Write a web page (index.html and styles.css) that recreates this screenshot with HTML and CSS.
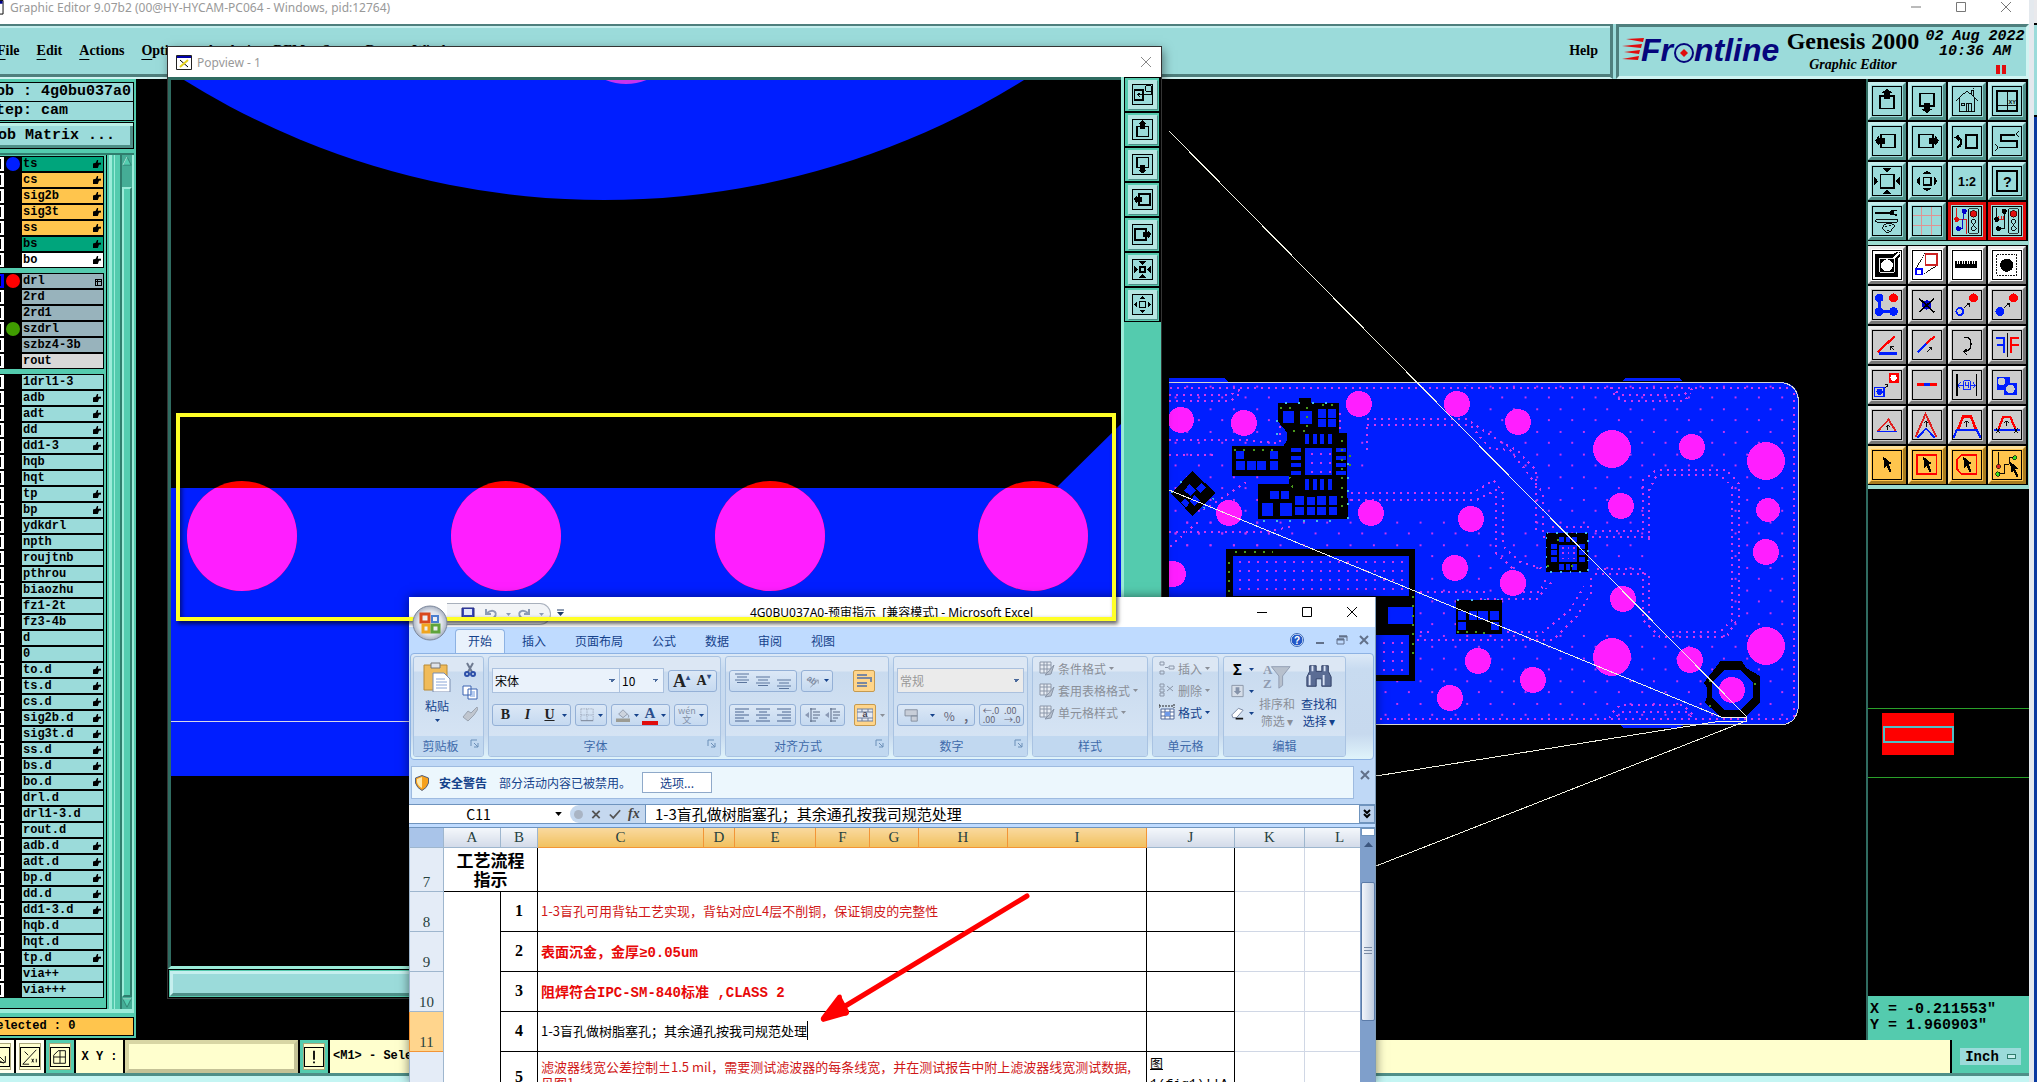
FILE: index.html
```html
<!DOCTYPE html>
<html lang="zh-CN">
<head>
<meta charset="utf-8">
<title>Graphic Editor</title>
<link rel="stylesheet" href="styles.css">
</head>
<body>
<svg class="defs" aria-hidden="true">
  <symbol id="up" viewBox="0 0 90 90"><path d="M23 30H68V69H23Z" fill="none" stroke="#000" stroke-width="6"/><path d="M45 5L61 18H56V40H35V18H29Z"/></symbol>
  <symbol id="down" viewBox="0 0 90 90"><path d="M23 21H68V60H23Z" fill="none" stroke="#000" stroke-width="6"/><path d="M45 84L61 72H56V50H35V72H29Z"/></symbol>
  <symbol id="left" viewBox="0 0 90 90"><path d="M27 24H71V66H27Z" fill="none" stroke="#000" stroke-width="6"/><path d="M6 44L19 28V36H38V54H19V60Z"/></symbol>
  <symbol id="right" viewBox="0 0 90 90"><path d="M19 24H63V66H19Z" fill="none" stroke="#000" stroke-width="6"/><path d="M84 44L71 28V36H52V54H71V60Z"/></symbol>
  <symbol id="inward" viewBox="0 0 90 90"><path d="M24 24H67V67H24Z" fill="none" stroke="#000" stroke-width="5"/><path d="M30 3H60L45 16ZM30 87H60L45 74ZM2 30V60L16 45ZM88 30V60L74 45Z"/></symbol>
  <symbol id="outward" viewBox="0 0 90 90"><path d="M34 34H57V57H34Z" fill="none" stroke="#000" stroke-width="5"/><path d="M30 24H60L45 10ZM30 66H60L45 80ZM24 30V60L10 45ZM66 30V60L80 45Z"/></symbol>
  <symbol id="arrow" viewBox="0 0 90 90"><path d="M33 18L60 40L50 43L60 64L54 68L44 48L36 54Z"/></symbol>
  <symbol id="light" viewBox="0 0 34 82"><path d="M2 2H32V80H2Z" fill="#9bdbda" stroke="#000" stroke-width="3"/><circle cx="17" cy="18" r="11" fill="#e00d0d" stroke="#000" stroke-width="2"/><circle cx="17" cy="43" r="8" fill="none" stroke="#000" stroke-width="3"/><circle cx="17" cy="65" r="8" fill="none" stroke="#000" stroke-width="3"/></symbol>
  <symbol id="tri" viewBox="0 0 5 3"><path d="M0 0H5L2.500 3Z" fill="currentColor"/></symbol>
  <symbol id="launch" viewBox="0 0 9 9"><path d="M1 7V1H7M4 4L8 8M8 4V8H4" fill="none" stroke="#6b8fb8"/></symbol>
  <symbol id="alignl" viewBox="0 0 16 14"><path d="M1 1H15M1 4H10M1 7H15M1 10H10M1 13H15" stroke="#4a6490"/></symbol>
  <symbol id="alignc" viewBox="0 0 16 14"><path d="M1 1H15M4 4H12M1 7H15M4 10H12M1 13H15" stroke="#4a6490"/></symbol>
  <symbol id="alignr" viewBox="0 0 16 14"><path d="M1 1H15M6 4H15M1 7H15M6 10H15M1 13H15" stroke="#4a6490"/></symbol>
  <symbol id="indent" viewBox="0 0 16 14"><path d="M5 1H11M8 4H15M8 7H15M8 10H13M5 13H11M6 0V14" stroke="#5a6a86" stroke-dasharray="none"/><path d="M0 7L4 4V10Z" fill="#8b9ab5"/></symbol>
  <symbol id="bars" viewBox="0 0 16 10"><path d="M1 1H15M3 4H13M1 7H15M3 9.500H13" stroke="#5a749c"/></symbol>
  <symbol id="sheet" viewBox="0 0 16 16"><path d="M1 2H12V13H1ZM1 5H12M1 9H12M5 2V13M8 2V13" fill="#e8edf4" stroke="#8b96a8"/><path d="M15 5L9 12L6 15L12 14Z" fill="#b7c0cd" stroke="#8b96a8"/></symbol>
</svg>

<main class="genesis">
  <header class="title"><svg class="xicon" viewBox="0 0 16 16"><path d="M.5.5H15.500V15H.5Z" fill="#fff" stroke="#000"/><path d="M1 1H15V4H1Z" fill="#008"/><path d="M4 6L12 13M12 6L4 13" stroke="#000"/></svg>
    <span>Graphic Editor 9.07b2 (00@HY-HYCAM-PC064 - Windows, pid:12764)</span>
    <div class="winctl"><button aria-label="Minimize"><svg viewBox="0 0 12 12"><path d="M1 6H11"/></svg></button><button aria-label="Maximize"><svg viewBox="0 0 12 12"><path d="M1.500 1.500H10.500V10.500H1.500Z"/></svg></button><button aria-label="Close"><svg viewBox="0 0 12 12"><path d="M1 1L11 11M11 1L1 11"/></svg></button></div>
  </header>
  <div class="top">
    <nav class="menu">
      <button><u>F</u>ile</button><button><u>E</u>dit</button><button><u>A</u>ctions</button><button><u>O</u>ptions</button><button>Analysis</button><button>DFM</button><button>Step</button><button>Rout</button><button>Windows</button><button class="help">Help</button>
    </nav>
    <section class="brand">
      <svg class="logo" viewBox="0 0 160 28"><g fill="#e00d0d"><path d="M4 2L22 1L21 5ZM0 9L20 7L19 11ZM2 15L18 13L17 17ZM0 22L17 19L16 23Z"/></g><text x="19" y="24">Fr</text><circle cx="62" cy="16" r="9" fill="none" stroke="#06067c" stroke-width="2"/><path d="M62 12L66 16L62 20L58 16Z" fill="#e00d0d"/><text x="72" y="24">ntline</text></svg>
      <div class="product"><b>Genesis 2000</b><i>Graphic Editor</i></div>
      <div class="clock"><span>02 Aug 2022</span><span>10:36 AM</span><svg viewBox="0 0 10 9"><path d="M0 0H4V9H0ZM6 0H10V9H6Z" fill="#e00d0d"/></svg></div>
    </section>
  </div>

  <div class="work">
    <aside class="layers">
      <div class="info"><p>Job : 4g0bu037a0</p><p>Step: cam</p></div>
      <button class="matrix">Job Matrix ...</button>
      <div class="frame">
        <div class="list">
          <div class="grp">
            <label class="ly green h"><input type="checkbox"><i class="blue"></i><span>ts</span></label>
            <label class="ly orange h"><input type="checkbox"><i></i><span>cs</span></label>
            <label class="ly orange h"><input type="checkbox"><i></i><span>sig2b</span></label>
            <label class="ly orange h"><input type="checkbox"><i></i><span>sig3t</span></label>
            <label class="ly orange h"><input type="checkbox"><i></i><span>ss</span></label>
            <label class="ly green h"><input type="checkbox"><i></i><span>bs</span></label>
            <label class="ly white h"><input type="checkbox"><i></i><span>bo</span></label>
          </div>
          <div class="grp">
            <label class="ly gray plus"><input type="checkbox" class="sel"><i class="red"></i><span>drl</span></label>
            <label class="ly gray"><input type="checkbox"><i></i><span>2rd</span></label>
            <label class="ly gray"><input type="checkbox"><i></i><span>2rd1</span></label>
            <label class="ly gray"><input type="checkbox"><i class="olive"></i><span>szdrl</span></label>
            <label class="ly gray"><input type="checkbox"><i></i><span>szbz4-3b</span></label>
            <label class="ly pale"><input type="checkbox"><i></i><span>rout</span></label>
          </div>
          <div class="grp">
            <label class="ly"><input type="checkbox"><i></i><span>1drl1-3</span></label>
            <label class="ly h"><input type="checkbox"><i></i><span>adb</span></label>
            <label class="ly h"><input type="checkbox"><i></i><span>adt</span></label>
            <label class="ly h"><input type="checkbox"><i></i><span>dd</span></label>
            <label class="ly h"><input type="checkbox"><i></i><span>dd1-3</span></label>
            <label class="ly"><input type="checkbox"><i></i><span>hqb</span></label>
            <label class="ly"><input type="checkbox"><i></i><span>hqt</span></label>
            <label class="ly h"><input type="checkbox"><i></i><span>tp</span></label>
            <label class="ly h"><input type="checkbox"><i></i><span>bp</span></label>
            <label class="ly"><input type="checkbox"><i></i><span>ydkdrl</span></label>
            <label class="ly"><input type="checkbox"><i></i><span>npth</span></label>
            <label class="ly"><input type="checkbox"><i></i><span>roujtnb</span></label>
            <label class="ly"><input type="checkbox"><i></i><span>pthrou</span></label>
            <label class="ly"><input type="checkbox"><i></i><span>biaozhu</span></label>
            <label class="ly"><input type="checkbox"><i></i><span>fz1-2t</span></label>
            <label class="ly"><input type="checkbox"><i></i><span>fz3-4b</span></label>
            <label class="ly"><input type="checkbox"><i></i><span>d</span></label>
            <label class="ly"><input type="checkbox"><i></i><span>0</span></label>
            <label class="ly h"><input type="checkbox"><i></i><span>to.d</span></label>
            <label class="ly h"><input type="checkbox"><i></i><span>ts.d</span></label>
            <label class="ly h"><input type="checkbox"><i></i><span>cs.d</span></label>
            <label class="ly h"><input type="checkbox"><i></i><span>sig2b.d</span></label>
            <label class="ly h"><input type="checkbox"><i></i><span>sig3t.d</span></label>
            <label class="ly h"><input type="checkbox"><i></i><span>ss.d</span></label>
            <label class="ly h"><input type="checkbox"><i></i><span>bs.d</span></label>
            <label class="ly h"><input type="checkbox"><i></i><span>bo.d</span></label>
            <label class="ly"><input type="checkbox"><i></i><span>drl.d</span></label>
            <label class="ly"><input type="checkbox"><i></i><span>drl1-3.d</span></label>
            <label class="ly"><input type="checkbox"><i></i><span>rout.d</span></label>
            <label class="ly h"><input type="checkbox"><i></i><span>adb.d</span></label>
            <label class="ly h"><input type="checkbox"><i></i><span>adt.d</span></label>
            <label class="ly h"><input type="checkbox"><i></i><span>bp.d</span></label>
            <label class="ly h"><input type="checkbox"><i></i><span>dd.d</span></label>
            <label class="ly h"><input type="checkbox"><i></i><span>dd1-3.d</span></label>
            <label class="ly"><input type="checkbox"><i></i><span>hqb.d</span></label>
            <label class="ly"><input type="checkbox"><i></i><span>hqt.d</span></label>
            <label class="ly h"><input type="checkbox"><i></i><span>tp.d</span></label>
            <label class="ly"><input type="checkbox"><i></i><span>via++</span></label>
            <label class="ly"><input type="checkbox"><i></i><span>via+++</span></label>
          </div>
        </div>
        <div class="groove"></div>
        <div class="vscroll"><svg viewBox="0 0 12 12"><path d="M6 1L11 11H1Z" fill="#54cdb0" stroke="#2f7d6d"/><path d="M6 1L1 11" stroke="#b9f5e6"/></svg><div class="thumb"></div><svg viewBox="0 0 12 12"><path d="M6 11L11 1H1Z" fill="#54cdb0" stroke="#2f7d6d"/><path d="M1 1H11" stroke="#b9f5e6"/></svg></div>
      </div>
      <p class="selected">Selected : 0</p>
    </aside>

    <section class="canvas">
      <svg viewBox="136 79 1730 961" preserveAspectRatio="xMinYMin slice">
        <defs>
          <pattern id="scatter" width="70" height="68" patternUnits="userSpaceOnUse"><path d="M8 8h6v6h-6ZM43 42h6v6h-6Z" fill="#c834ee"/></pattern>
          <pattern id="mesh" width="27" height="27" patternUnits="userSpaceOnUse"><path d="M20 10h6v6h-6Z" fill="#c834ee"/></pattern>
          <clipPath id="board"><path d="M1169 382H1782Q1799 384 1799 402V706Q1797 722 1784 724H1169Z"/></clipPath>
        </defs>
        <path d="M1169 378H1224L1228 382H1169ZM1622 381L1626 378H1679L1683 381ZM1620 725L1624 728H1678L1684 725Z" fill="#001eff"/>
        <g clip-path="url(#board)">
          <path d="M1160 370H1810V730H1160Z" fill="#001eff"/>
          <g transform="translate(1160 360) scale(.33333)">
            <path d="M570 60H1900V1090H650V720H790V560H30V480H290V380H600V470H1100V380H600V200L980 190V80Z" fill="url(#scatter)"/>
            <path d="M27 60H350V560H27Z" fill="url(#scatter)"/>
          </g>
          <g transform="translate(1480 360) scale(.33333)">
            <path d="M-330 200H0L70 260L160 360V500H-20L-40 410H-330ZM510 345H750V815H510ZM80 650L190 640H500V800H230L60 820Z" fill="#001eff"/>
            <g fill="none" stroke="#d038f0" stroke-width="6" stroke-dasharray="6 15">
              <path d="M-950 84H930M942 100V1070M-300 1077H940M390 84L424 105H610L640 84M400 100L424 124H612L632 100M388 1075L405 1048L424 1035H610L640 1065M410 1070L424 1056H620L640 1077"/>
              <path d="M-340 178H-40L70 250L110 270L168 330V520M-340 195H-30L30 265L90 270L147 345L189 400V530H510M345 513H490V360L530 330H740L776 370V770L740 830H540L490 780V627H335M345 643H508V800M508 540V390L530 345H720L757 380V780L720 815H560"/>
              <path d="M-450 399H-20L40 360L70 400V560L120 605L190 627M-450 420H-10L49 390V580L100 627M-200 815H-150M-210 840H220L290 770L333 700V650M80 816H190L270 750L312 680M-200 697L20 697M0 718H170L220 660M130 697H180L200 650M215 500H335"/>
              <path d="M-933 105H-750L-710 84M-933 124H-750L-720 100M-933 240H-710L-600 250V180M-933 285H-800M-933 515H-650L-560 500M-830 450L-700 366M-930 560L-840 480M-420 160V280M-340 200V270"/>
            </g>
          </g>
          <g transform="translate(1160 360) scale(.33333)">
            <path d="M354 129H417V115H453V129H537V220H561L563 476H295V373H388V348H217V258H370L382 240V218L354 185ZM98 333L167 400L98 468L33 400ZM199 567H765V962H199ZM888 720H1026V822H888Z"/>
            <g fill="#001eff">
              <path d="M369 153h33v35h-33zM420 153h36v39h-36zM474 147h24v27h-24zM504 147h24v27h-24zM474 178h24v22h-24zM504 178h24v22h-24zM435 222h12v30h-12zM459 222h12v30h-12zM481 222h12v30h-12zM504 222h12v30h-12zM435 263h81v82h-81zM393 264h30v12h-30zM393 288h30v12h-30zM393 310h30v12h-30zM393 333h30v12h-30zM528 264h30v12h-30zM528 288h30v12h-30zM528 310h30v12h-30zM528 333h30v12h-30zM435 357h12v33h-12zM459 357h12v33h-12zM481 357h12v33h-12zM504 357h12v33h-12z"/>
              <path d="M228 273h24v24h-24zM331 273h24v24h-24zM228 303h27v26h-27zM261 303h27v26h-27zM291 303h27v26h-27zM331 303h24v26h-24zM331 393h26v24h-26zM363 393h24v24h-24zM306 430h33v38h-33zM360 430h36v38h-36zM405 408h27v27h-27zM442 411h24v24h-24zM471 408h27v27h-27zM508 408h24v27h-24zM405 441h27v24h-27zM442 441h24v24h-24zM471 441h27v24h-27zM508 441h24v24h-24z"/>
              <path d="M88 373L108 392L92 408L72 392ZM124 370L138 383L122 398L108 385ZM104 405L120 420L104 438L88 424ZM74 416L88 430L78 442L62 428ZM219 588H747V708H219ZM684 741h75v51h-75zM640 825h107v120h-107zM894 753h24v27h-24zM927 753h24v27h-24zM957 753h27v27h-27zM990 753h27v27h-27zM894 786h24v24h-24zM993 786h24v24h-24z"/>
            </g>
            <path d="M219 588H747V700H219ZM640 825h107v110h-107zM437 265h75v75h-75z" fill="url(#mesh)"/>
            <g fill="none" stroke="#4a9a1c" stroke-width="6" stroke-dasharray="6 22"><path d="M222 270H350M360 145H400M400 212H440M440 140V200M485 135H530M388 350L400 390M547 240V465M570 285V340M225 576H340M207 605V700M758 708V900M890 815H1020"/></g>
            <g fill="none" stroke="#45b8e8" stroke-width="6" stroke-dasharray="6 34"><path d="M375 129H500M351 180V260M563 310V476M308 482H540M892 720H1020M35 398L80 345M130 445L160 415"/></g>
          </g>
          <g transform="translate(1480 360) scale(.33333)">
            <path d="M-6 720H66V822H-6ZM198 520H324V636H198ZM722 903H785L800 925L840 948V1028L798 1070H722L675 1028L682 1005V985L672 968Z"/>
            <path d="M-6 753h30v27h-30zM30 753h27v27h-27zM33 786h24v24h-24zM237 555h54v50h-54zM238 531h14v14h-14zM257 531h14v14h-14zM276 531h14v14h-14zM238 612h14v18h-14zM257 612h14v18h-14zM276 612h14v18h-14zM214 552h17v15h-17zM214 571h17v15h-17zM214 590h17v15h-17zM298 552h17v15h-17zM298 571h17v15h-17zM298 590h17v15h-17zM733 930H781L819 968V1012L781 1050H733L695 1012V968Z" fill="#001eff"/>
            <path d="M246 564H290M246 580H290M246 596H290" fill="none" stroke="#c834ee" stroke-width="5" stroke-dasharray="5 12"/>
            <path d="M200 520H324V636H200Z" fill="none" stroke="#45b8e8" stroke-width="5" stroke-dasharray="5 24"/>
            <path d="M690 960V1040M825 970V1030M230 540H300M200 618H310M10 818H60" fill="none" stroke="#4a9a1c" stroke-width="6" stroke-dasharray="6 68"/>
          </g>
          <g fill="#ff1eff">
            <circle cx="1181" cy="420" r="13"/><circle cx="1244" cy="423" r="13"/><circle cx="1359" cy="404" r="13"/><circle cx="1457" cy="404" r="13"/><circle cx="1229" cy="513" r="13"/><circle cx="1371" cy="513" r="13"/><circle cx="1471" cy="519" r="13"/><circle cx="1455" cy="568" r="13"/><circle cx="1173" cy="574" r="13"/><circle cx="1478" cy="661" r="13"/><circle cx="1450" cy="698" r="13"/>
            <circle cx="1518" cy="422" r="13"/><circle cx="1612" cy="449" r="19"/><circle cx="1692" cy="447" r="13"/><circle cx="1766" cy="461" r="19"/><circle cx="1621" cy="506" r="13"/><circle cx="1768" cy="510" r="12"/><circle cx="1766" cy="552" r="13"/><circle cx="1513" cy="583" r="13"/><circle cx="1623" cy="599" r="13"/><circle cx="1612" cy="657" r="19"/><circle cx="1690" cy="660" r="13"/><circle cx="1766" cy="646" r="19"/><circle cx="1533" cy="680" r="13"/><circle cx="1732" cy="690" r="13"/>
          </g>
        </g>
        <path d="M1169 382.500H1782Q1798 385 1798.500 402V706Q1797 722 1784 724.500H1169" fill="none" stroke="#d8d8d0"/>
        <path d="M1169 131L1747 717M1169 490L1721 717H1746V721H1721L1376 776M1746 721L1376 866" fill="none" stroke="#f2f2e4"/>
      </svg>
    </section>

    <aside class="tools">
      <div class="grid cyan">
        <button aria-label="Pan up"><svg viewBox="0 0 90 90"><use href="#up"/></svg></button>
        <button aria-label="Pan down"><svg viewBox="0 0 90 90"><use href="#down"/></svg></button>
        <button aria-label="Home"><svg viewBox="0 0 90 90" class="ln"><path d="M10 44L45 12L80 44M20 36V80H70V36M58 22V10H66V30M28 52H38V60H28ZM44 80V52H58V80M50 54V80M64 6L68 2"/></svg></button>
        <button aria-label="Coordinates"><svg viewBox="0 0 90 90"><path d="M12 12H78V78H12Z" fill="none" stroke="#000" stroke-width="5"/><path d="M46 12V78M12 58H78" stroke="#000" stroke-width="3"/><text x="50" y="54" class="xy">XY</text></svg></button>
        <button aria-label="Pan left"><svg viewBox="0 0 90 90"><use href="#left"/></svg></button>
        <button aria-label="Pan right"><svg viewBox="0 0 90 90"><use href="#right"/></svg></button>
        <button aria-label="Previous view"><svg viewBox="0 0 90 90"><path d="M41 27H77V67H41Z" fill="none" stroke="#000" stroke-width="6"/><path d="M12 64C30 64 30 36 16 34" fill="none" stroke="#000" stroke-width="7"/><path d="M4 34L18 24V44Z"/></svg></button>
        <button aria-label="Snake"><svg viewBox="0 0 90 90"><path d="M72 25H26V44H78V66H18" fill="none" stroke="#000" stroke-width="6"/><path d="M82 14L74 24L82 32M8 56L16 66L8 76" fill="none" stroke="#000" stroke-width="3"/></svg></button>
        <button aria-label="Zoom in"><svg viewBox="0 0 90 90"><use href="#inward"/></svg></button>
        <button aria-label="Zoom out"><svg viewBox="0 0 90 90"><use href="#outward"/></svg></button>
        <button aria-label="Scale"><svg viewBox="0 0 90 90"><text x="45" y="60" class="scale">1:2</text></svg></button>
        <button aria-label="Query"><svg viewBox="0 0 90 90"><path d="M12 12H78V78H12Z" fill="none" stroke="#000" stroke-width="5"/><text x="46" y="64" class="ask">?</text></svg></button>
        <button aria-label="Setup"><svg viewBox="0 0 90 90"><path d="M6 16H52L60 10L76 8V14H66V22H76V28L60 26L52 22H6Z"/><path d="M6 44L16 39H78V49H16Z" fill="none" stroke="#000" stroke-width="3"/><path d="M32 70C28 58 44 50 60 54C76 58 70 66 62 68C62 78 50 84 42 80ZM40 64h5M52 60h5M46 74h5" fill="none" stroke="#000" stroke-width="3"/></svg></button>
        <button aria-label="Grid"><svg viewBox="0 0 90 90"><path d="M28 0V90M60 0V90M0 28H90M0 60H90" stroke="#e58f8f" stroke-width="3"/></svg></button>
        <button class="redb" aria-label="Net check"><svg viewBox="0 0 90 90"><path d="M12 2V40H42V86" fill="none" stroke="#e00d0d" stroke-width="3"/><path d="M36 12L32 40V70H18" fill="none" stroke="#00c" stroke-width="3"/><circle cx="12" cy="40" r="8" fill="#e00d0d"/><circle cx="36" cy="14" r="8" fill="#00c"/><circle cx="18" cy="70" r="8" fill="#00c"/><use href="#light" x="48" y="4" width="36" height="82"/></svg></button>
        <button class="redb" aria-label="Rule check"><svg viewBox="0 0 90 90"><path d="M12 2V40M36 12V70H18" fill="none" stroke="#000" stroke-width="3"/><path d="M14 40H34M19 30V40M26 30V40M33 30V40" stroke="#e00d0d" stroke-width="3"/><circle cx="12" cy="40" r="8"/><circle cx="36" cy="14" r="8"/><circle cx="18" cy="70" r="8"/><use href="#light" x="48" y="4" width="36" height="82"/></svg></button>
      </div>
      <div class="grid grey">
        <button class="lit" aria-label="Select point"><svg viewBox="0 0 90 90"><path d="M7 10H66L76 2H88V16L80 26V82H7Z"/><path d="M22 24H68V68H22Z" fill="none" stroke="#fff" stroke-width="3"/><circle cx="45" cy="46" r="19" fill="#fff"/><path d="M66 24L84 6" stroke="#fff" stroke-width="8"/></svg></button>
        <button class="lit" aria-label="Move copy"><svg viewBox="0 0 90 90"><path d="M8 58L38 8M20 76H30L78 46" stroke="#000" stroke-width="3" fill="none" stroke-dasharray="6 2"/><path d="M40 11H76V46H40Z" fill="#fff" stroke="#c22" stroke-width="6"/><path d="M10 58H29V76H10Z" fill="#fff" stroke="#00f" stroke-width="5"/></svg></button>
        <button class="lit" aria-label="Ruler"><svg viewBox="0 0 90 90"><path d="M8 56V32h4v10h4V32h4v10h4V32h4v10h4V32h4v10h4V32h4v10h4V32h4v10h4V32h4v10h4V32h4v10h4V32h4v24Z"/></svg></button>
        <button class="lit" aria-label="Pad"><svg viewBox="0 0 90 90"><path d="M12 12H76V78H12Z" fill="none" stroke="#000" stroke-width="3" stroke-dasharray="6 3"/><circle cx="44" cy="46" r="21"/></svg></button>
        <button aria-label="Connect"><svg viewBox="0 0 90 90"><path d="M20 22V66H66" fill="none" stroke="#001eff" stroke-width="10"/><circle cx="20" cy="22" r="14" fill="#001eff"/><circle cx="20" cy="66" r="14" fill="#001eff"/><circle cx="66" cy="66" r="14" fill="#001eff"/><circle cx="66" cy="22" r="14" fill="#f00"/></svg></button>
        <button aria-label="Delete"><svg viewBox="0 0 90 90"><circle cx="44" cy="45" r="15" fill="#00c"/><path d="M20 24L68 68M68 24L20 68" stroke="#000" stroke-width="5"/></svg></button>
        <button aria-label="Move"><svg viewBox="0 0 90 90"><circle cx="66" cy="22" r="14" fill="#f00"/><circle cx="22" cy="66" r="11" fill="none" stroke="#001eff" stroke-width="6"/><path d="M34 56L52 40M44 40H54V50" class="th"/></svg></button>
        <button aria-label="Copy"><svg viewBox="0 0 90 90"><circle cx="66" cy="22" r="14" fill="#f00"/><circle cx="22" cy="66" r="14" fill="#001eff"/><path d="M34 56L52 40M44 40H54V50" class="th"/></svg></button>
        <button aria-label="Rotate"><svg viewBox="0 0 90 90"><path d="M16 68L70 16" stroke="#f00" stroke-width="7"/><path d="M20 73H76" stroke="#001eff" stroke-width="8"/><path d="M66 60L58 52M56 60V50H66" class="th"/></svg></button>
        <button aria-label="Stretch"><svg viewBox="0 0 90 90"><path d="M42 42L70 16" stroke="#f00" stroke-width="7"/><path d="M16 68L42 42" stroke="#001eff" stroke-width="8"/><path d="M48 66L58 54M50 54H60V62" class="th"/></svg></button>
        <button aria-label="Arc"><svg viewBox="0 0 90 90"><path d="M34 20H46Q58 24 58 44Q56 66 34 66M44 58L34 66L44 76" fill="none" stroke="#000" stroke-width="4"/></svg></button>
        <button aria-label="Mirror"><svg viewBox="0 0 90 90"><path d="M10 22H36V72M12 44H36" fill="none" stroke="#001eff" stroke-width="7"/><path d="M46 6V84" stroke="#000" stroke-width="3"/><path d="M82 22H58V72M58 44H82" fill="none" stroke="#f00" stroke-width="7"/></svg></button>
        <button aria-label="Change symbol"><svg viewBox="0 0 90 90"><path d="M50 7H82V37H50Z" fill="#f00"/><circle cx="66" cy="22" r="10" fill="#fff"/><path d="M6 53H35V82H6Z" fill="none" stroke="#001eff" stroke-width="4"/><circle cx="21" cy="67" r="10" fill="#001eff"/><path d="M38 54L48 44M40 44H48V52" class="th"/></svg></button>
        <button aria-label="Break"><svg viewBox="0 0 90 90"><path d="M14 43H76" stroke="#f00" stroke-width="8"/><path d="M36 43H54" stroke="#001eff" stroke-width="8"/></svg></button>
        <button aria-label="Spacing"><svg viewBox="0 0 90 90"><path d="M13 10V80M76 10V80" stroke="#000" stroke-width="4"/><path d="M16 46H72M24 36L16 46L24 56M64 36L72 46L64 56" fill="none" stroke="#001eff" stroke-width="3"/><path d="M34 32H56V60H34Z" fill="#ccc" stroke="#001eff" stroke-width="3"/><path d="M40 36V46H50M50 36V56" fill="none" stroke="#001eff" stroke-width="3"/></svg></button>
        <button aria-label="Merge"><svg viewBox="0 0 90 90"><path d="M12 18H56V40H76V76H34V60H12Z" fill="#001eff"/><circle cx="28" cy="34" r="12" fill="#ccc"/><circle cx="56" cy="58" r="14" fill="#ccc"/></svg></button>
        <button aria-label="Triangle"><svg viewBox="0 0 90 90"><path d="M14 66L50 28L74 66" fill="none" stroke="#e02020" stroke-width="6"/><path d="M14 66H76" stroke="#001eff" stroke-width="6"/><path d="M48 60V46M42 52L48 46L54 52" class="th"/></svg></button>
        <button aria-label="Peak"><svg viewBox="0 0 90 90"><path d="M8 84L40 10L76 84" fill="none" stroke="#e02020" stroke-width="6"/><path d="M14 86L42 56L70 86" fill="none" stroke="#001eff" stroke-width="6"/><path d="M42 50V32M36 38L42 32L48 38" class="th"/></svg></button>
        <button aria-label="Trapezoid"><svg viewBox="0 0 90 90"><path d="M16 60L32 18H58L74 60" fill="none" stroke="#f00" stroke-width="8"/><path d="M2 86L12 61H76L88 86" fill="none" stroke="#001eff" stroke-width="7"/><path d="M43 52V32M36 38L43 32L50 38" class="th"/></svg></button>
        <button aria-label="Trapezoid cut"><svg viewBox="0 0 90 90"><path d="M18 58L32 20H56L72 58" fill="none" stroke="#f00" stroke-width="7"/><path d="M2 62H88" stroke="#001eff" stroke-width="6"/><path d="M8 54L24 72M24 54L8 72M66 54L82 72M82 54L66 72M43 48V32M36 38L43 32L50 38" class="th"/></svg></button>
        <button class="gold" aria-label="Select"><svg viewBox="0 0 90 90"><use href="#arrow"/></svg></button>
        <button class="gold" aria-label="Select window"><svg viewBox="0 0 90 90"><path d="M13 12H76V74H13Z" fill="none" stroke="#f00" stroke-width="5"/><use href="#arrow"/></svg></button>
        <button class="gold" aria-label="Select polygon"><svg viewBox="0 0 90 90"><path d="M28 12H76V74H28L13 58V28Z" fill="none" stroke="#f00" stroke-width="5"/><use href="#arrow"/></svg></button>
        <button class="gold" aria-label="Select net"><svg viewBox="0 0 90 90"><path d="M18 4V48M18 72H38V42H52V22H68" fill="none" stroke="#000" stroke-width="3"/><g stroke="#000" stroke-width="2"><circle cx="18" cy="50" r="7" fill="#d22"/><circle cx="16" cy="74" r="7" fill="#3d2"/><circle cx="70" cy="22" r="7" fill="#3d2"/></g><path d="M55 34L82 56L72 59L82 80L76 84L66 64L58 70Z"/></svg></button>
      </div>
      <div class="overview"><svg viewBox="0 0 161 70"><path d="M0 .5H161M0 69.500H161" stroke="#2aa02a"/><path d="M14 5H86V47H14Z" fill="#f00"/><path d="M16 18.500H85V34H16Z" fill="none" stroke="#4fc0c8" stroke-width="2"/></svg></div>
      <div class="coords"><span>X = -0.211553"</span><span>Y = 1.960903"</span></div>
    </aside>
  </div>

  <footer class="status">
    <button class="sq" aria-label="Angle"><svg viewBox="0 0 20 20"><path d="M3 3L15 15M9 16H16V9M6 12L14 17"/></svg></button>
    <button class="sq" aria-label="Snap"><svg viewBox="0 0 20 20"><path d="M2 18L17 2M4 4L8 8M2 18H9M12 12L14 16M14 12L12 16M17 12V16"/></svg></button>
    <button class="sq teal" aria-label="Grid"><svg viewBox="0 0 20 20"><path d="M8 3H16V17H3V8ZM3 10H16M10 3V17"/></svg></button>
    <label class="xyl" for="xy">X Y :</label>
    <input id="xy" type="text">
    <button class="sq teal" aria-label="Alert"><svg viewBox="0 0 20 20"><path d="M10 3V13M10 15V17" stroke-width="2"/></svg></button>
    <p class="msg">&lt;M1&gt; - Select Feature</p>
    <button class="inch">Inch <i></i></button>
  </footer>
</main>

<div class="behind"></div>

<section class="popview">
  <header><svg viewBox="0 0 16 15"><path d="M.5.5H15.500V14.500H.5Z" fill="#fff" stroke="#222"/><path d="M1 1H15V3H1Z" fill="#00a"/><path d="M4 5L12 12" stroke="#000"/><path d="M12 5L4 12" stroke="#e5d21c" stroke-width="2"/></svg><span>Popview - 1</span><button aria-label="Close"><svg viewBox="0 0 12 12"><path d="M1 1L11 11M11 1L1 11"/></svg></button></header>
  <div class="pbody">
    <svg class="pview" viewBox="171 80 950 886" preserveAspectRatio="xMinYMin slice">
      <path d="M171 488H1056L1121 424V776H171Z" fill="#001eff"/>
      <circle cx="604" cy="-595" r="795" fill="#001eff"/>
      <circle cx="626" cy="30" r="54" fill="#c834ee"/>
      <g fill="#f00"><circle cx="242" cy="536" r="55"/><circle cx="506" cy="536" r="55"/><circle cx="770" cy="536" r="55"/><circle cx="1033" cy="536" r="55"/></g>
      <clipPath id="inblue"><path d="M171 488H1121V700H171Z"/></clipPath>
      <g fill="#ff1eff" clip-path="url(#inblue)"><circle cx="242" cy="536" r="55"/><circle cx="506" cy="536" r="55"/><circle cx="770" cy="536" r="55"/><circle cx="1033" cy="536" r="55"/></g>
      <path d="M171 721.500H1121" stroke="#d8d8e8"/>
    </svg>
    <div class="ptools">
      <button aria-label="Zoom box"><svg viewBox="6 6 78 78"><path d="M12 26H46V68H12Z" fill="none" stroke="#000" stroke-width="7"/><path d="M58 10H80V32H58ZM80 32V46H24M34 38L24 46L34 56" fill="none" stroke="#000" stroke-width="4"/></svg></button>
      <button aria-label="Pan up"><svg viewBox="12 4 66 74"><use href="#up" width="90" height="90"/></svg></button>
      <button aria-label="Pan down"><svg viewBox="12 12 66 74"><use href="#down" width="90" height="90"/></svg></button>
      <button aria-label="Pan left"><svg viewBox="4 12 74 66"><use href="#left" width="90" height="90"/></svg></button>
      <button aria-label="Pan right"><svg viewBox="12 12 74 66"><use href="#right" width="90" height="90"/></svg></button>
      <button aria-label="Zoom in"><svg viewBox="0 0 90 90"><path d="M34 34H56V56H34Z" fill="none" stroke="#000" stroke-width="7"/><path d="M26 3H64L45 24ZM26 87H64L45 66ZM3 26V64L24 45ZM87 26V64L66 45Z"/></svg></button>
      <button aria-label="Zoom out"><svg viewBox="6 6 78 78"><use href="#outward" width="90" height="90"/></svg></button>
    </div>
  </div>
  <div class="pstatus"></div>
</section>

<section class="excel">
  <header class="xtitle"><span>4G0BU037A0-预审指示&nbsp; [兼容模式] - Microsoft Excel</span>
    <div class="winctl"><button aria-label="Minimize"><svg viewBox="0 0 12 12"><path d="M1 6.500H11"/></svg></button><button aria-label="Maximize"><svg viewBox="0 0 12 12"><path d="M1.500 1.500H10.500V10.500H1.500Z"/></svg></button><button aria-label="Close"><svg viewBox="0 0 12 12"><path d="M1 1L11 11M11 1L1 11"/></svg></button></div>
  </header>
  <div class="qat">
    <button aria-label="Save"><svg viewBox="0 0 16 16"><path d="M2 2H14V14H2Z" fill="#3b46b8" stroke="#232a7c"/><path d="M4 3H12V9H4Z" fill="#dfe8fa"/><path d="M5 11H11V14H5Z" fill="#dfe8fa"/></svg></button>
    <button aria-label="Undo"><svg viewBox="0 0 16 16"><path d="M3 3V8H8M4 7Q9 3 12 6T8 14" fill="none" stroke="#8c9bb5" stroke-width="2"/></svg></button><svg class="t"><use href="#tri"/></svg>
    <button aria-label="Redo"><svg viewBox="0 0 16 16"><path d="M13 3V8H8M12 7Q7 3 4 6T8 14" fill="none" stroke="#8c9bb5" stroke-width="2"/></svg></button><svg class="t"><use href="#tri"/></svg>
  </div>
  <svg class="more" viewBox="0 0 7 7"><path d="M0 1H7" stroke="#1f3b66"/><path d="M0 3H7L3.500 7Z" fill="#1f3b66"/></svg>
  <button class="orb" aria-label="Office"><svg viewBox="0 0 36 36"><defs><radialGradient id="o"><stop offset="0" stop-color="#fff"/><stop offset=".7" stop-color="#dfe3ea"/><stop offset="1" stop-color="#a9b2c2"/></radialGradient></defs><circle cx="18" cy="18" r="17" fill="url(#o)" stroke="#7c879b"/><g fill="none" stroke-width="3"><path d="M9 9H17V17H9Z" stroke="#d9491d"/><path d="M20 11H26V17H20Z" stroke="#4b7fd0" stroke-width="2"/><path d="M11 20H17V27H11Z" stroke="#f0a51e"/><path d="M20 20H27V27H20Z" stroke="#5fa43a"/></g></svg></button>

  <nav class="tabs"><button class="on">开始</button><button>插入</button><button>页面布局</button><button>公式</button><button>数据</button><button>审阅</button><button>视图</button>
    <span class="docctl"><svg viewBox="0 0 14 14"><circle cx="7" cy="7" r="6" fill="#2258c8" stroke="#fff"/><circle cx="7" cy="7" r="6.500" fill="none" stroke="#3868b8"/><text x="7" y="11">?</text></svg><svg viewBox="0 0 12 12"><path d="M2 9H10" stroke="#62718a" stroke-width="2"/></svg><svg viewBox="0 0 12 12"><path d="M3 2H11V7M1 5H8V10H1Z" fill="none" stroke="#62718a"/><path d="M3 2.500H11M1 5.500H8" stroke="#62718a" stroke-width="2"/></svg><svg viewBox="0 0 12 12"><path d="M2 2L10 10M10 2L2 10" stroke="#62718a" stroke-width="2"/></svg></span>
  </nav>

  <div class="ribbon">
    <section class="rg w1"><div class="rb clip">
      <button class="big"><svg viewBox="0 0 28 30"><path d="M1 3H24V28H1Z" fill="#f0bb59" stroke="#b98a34"/><path d="M8 1H17V6H8Z" fill="#dfe3ea" stroke="#777"/><path d="M10 11H21L27 17V30H10Z" fill="#fff" stroke="#7b8db0"/><path d="M13 17H22M13 20H24M13 23H24M13 26H24" stroke="#8aa6d8"/></svg>粘贴<svg class="t"><use href="#tri"/></svg></button>
      <div class="smalls"><button aria-label="Cut"><svg viewBox="0 0 16 16"><path d="M5 1L10 10M11 1L6 10" stroke="#6e7a90" stroke-width="2"/><circle cx="5" cy="12" r="2" fill="none" stroke="#2c4fa8" stroke-width="2"/><circle cx="11" cy="12" r="2" fill="none" stroke="#2c4fa8" stroke-width="2"/></svg></button><button aria-label="Copy"><svg viewBox="0 0 16 16"><path d="M1 2H9V11H1ZM6 5H15V15H6Z" fill="#fff" stroke="#3a62b0"/><path d="M8 8H13M8 10H13M8 12H13" stroke="#6f9ae0"/></svg></button><button aria-label="Format painter"><svg viewBox="0 0 16 16"><path d="M15 1L9 7L6 5L1 11L6 15L12 9L16 3Z" fill="#c0c6cf" stroke="#9aa3b0"/></svg></button></div>
    </div><h3>剪贴板<svg><use href="#launch"/></svg></h3></section>
    <section class="rg w2"><div class="rb rows">
      <div class="r"><select class="s130" aria-label="Font"><option>宋体</option></select><select class="s46" aria-label="Size"><option>10</option></select><span class="bg"><button class="serif f18">A<sup>▴</sup></button><button class="serif f14">A<sup>▾</sup></button></span></div>
      <div class="r tight"><span class="bg"><button class="serif f14">B</button><button class="serif f14 it">I</button><button class="serif f14 ul">U</button><svg class="t"><use href="#tri"/></svg></span><span class="bg"><svg class="i" viewBox="0 0 16 16"><path d="M1 1H15V15M1 1V15M8 1V15M1 8H15" fill="none" stroke="#8b96a8" stroke-dasharray="1 1"/><path d="M1 14.500H15" stroke="#6b7688"/></svg><svg class="t"><use href="#tri"/></svg></span><span class="bg"><svg class="i" viewBox="0 0 16 16"><path d="M3 7L8 2L13 7L8 11ZM13 7Q16 9 14 11" fill="#ccd3dd" stroke="#8b96a8"/><path d="M0 12H16V16H0Z" fill="#9c9c94"/></svg><svg class="t"><use href="#tri"/></svg><span class="fa">A</span><svg class="t"><use href="#tri"/></svg></span><span class="bg"><span class="wen">wén<br>文</span><svg class="t"><use href="#tri"/></svg></span></div>
    </div><h3>字体<svg><use href="#launch"/></svg></h3></section>
    <section class="rg w3"><div class="rb rows">
      <div class="r"><span class="bg three"><svg class="i hi"><use href="#bars"/></svg><svg class="i"><use href="#bars"/></svg><svg class="i lo"><use href="#bars"/></svg></span><span class="bg"><svg class="i" viewBox="0 0 16 16"><text x="0" y="9" transform="rotate(35 4 8)" class="ab">ab</text><path d="M5 15L14 7M10 7H14V11" fill="none" stroke="#8b96a8"/></svg><svg class="t"><use href="#tri"/></svg></span><button class="hot"><svg viewBox="0 0 16 16"><path d="M1 2H11M1 5H15V9M1 13H11M1 10H11" stroke="#7b88a0" stroke-width="2" fill="none"/></svg></button></div>
      <div class="r"><span class="bg three"><svg class="i"><use href="#alignl"/></svg><svg class="i"><use href="#alignc"/></svg><svg class="i"><use href="#alignr"/></svg></span><span class="bg two"><svg class="i"><use href="#indent"/></svg><svg class="i"><use href="#indent"/></svg></span><button class="hot h2"><svg viewBox="0 0 16 16"><path d="M0 2H16V14H0ZM0 5H16M0 11H16M5 2V5M11 2V5M5 11V14M11 11V14" fill="#e6eaf2" stroke="#6f7f9c"/><text x="8" y="10" class="am">a</text></svg></button><svg class="t dimb"><use href="#tri"/></svg></div>
    </div><h3>对齐方式<svg><use href="#launch"/></svg></h3></section>
    <section class="rg w4"><div class="rb rows">
      <div class="r"><select class="s127" disabled aria-label="Number format"><option>常规</option></select></div>
      <div class="r tight"><span class="bg w79"><svg class="i" viewBox="0 0 16 16"><path d="M0 2H14V9H0ZM7 9H14V15H7Z" fill="#c8ced8" stroke="#808b9c"/></svg><svg class="t"><use href="#tri"/></svg><span>%</span><b>,</b></span><span class="bg two dec"><span>←.0<br>.00</span><span>.00<br>→.0</span></span></div>
    </div><h3>数字<svg><use href="#launch"/></svg></h3></section>
    <section class="rg w5"><div class="rb col dim">
      <button><svg><use href="#sheet"/></svg>条件格式<svg class="t"><use href="#tri"/></svg></button><button><svg><use href="#sheet"/></svg>套用表格格式<svg class="t"><use href="#tri"/></svg></button><button><svg><use href="#sheet"/></svg>单元格样式<svg class="t"><use href="#tri"/></svg></button>
    </div><h3>样式</h3></section>
    <section class="rg w6"><div class="rb col">
      <button class="dimb"><svg viewBox="0 0 16 16"><path d="M1 2H5V5H1ZM1 11H5V14H1ZM10 6H15V9H10ZM6 7.500H9" fill="none" stroke="#8b96a8"/></svg>插入<svg class="t"><use href="#tri"/></svg></button><button class="dimb"><svg viewBox="0 0 16 16"><path d="M1 2H5V5H1ZM1 7H5V10H1ZM1 11H5V14H1ZM8 4L14 9M14 4L8 9" fill="none" stroke="#8b96a8"/></svg>删除<svg class="t"><use href="#tri"/></svg></button><button><svg viewBox="0 0 16 16"><path d="M0 2H15M0 0V4M15 0V4" stroke="#222" stroke-dasharray="2 1"/><path d="M2 5H15V15H2ZM2 8H15M2 12H15M6 5V15M11 5V15" fill="#fff" stroke="#50699a"/><path d="M6 8H11V12H6Z" fill="#6f9ae8"/></svg>格式<svg class="t"><use href="#tri"/></svg></button>
    </div><h3>单元格</h3></section>
    <section class="rg w7"><div class="rb edit">
      <div class="smalls e"><button><b class="sigma">Σ</b><svg class="t"><use href="#tri"/></svg></button><button><svg viewBox="0 0 16 16"><path d="M2 2H14V14H2Z" fill="#d5dde8" stroke="#8b96a8"/><path d="M6 4H10V8H12L8 12L4 8H6Z" fill="#8593aa"/></svg><svg class="t"><use href="#tri"/></svg></button><button><svg viewBox="0 0 16 16"><path d="M2 10L9 3L14 5L7 13H3Z" fill="#fff" stroke="#7584a0"/><path d="M6 14H14" stroke="#111" stroke-width="2"/></svg><svg class="t"><use href="#tri"/></svg></button></div>
      <button class="big dimb"><svg viewBox="0 0 30 30"><text x="0" y="13" class="az">A</text><text x="0" y="28" class="az">Z</text><path d="M9 5H29L21 15V25L17 28V15Z" fill="#b7c0cd" stroke="#8f9bb0"/></svg>排序和<br>筛选 ▾</button>
      <button class="big"><svg viewBox="0 0 30 30"><path d="M5 4H12V10H18V4H25V10L28 16V26H18V18H12V26H2V16L5 10Z" fill="#5a6c94" stroke="#2d3c63"/><path d="M5 14V25M20 14V25M8 4V10M21 4V10" stroke="#dbe4f5" stroke-width="2"/></svg>查找和<br>选择 ▾</button>
    </div><h3>编辑</h3></section>
  </div>

  <div class="warn"><div class="wbox"><svg viewBox="0 0 14 16"><path d="M7 .5L13.500 3V8Q12 13 7 15.500Q2 13 .5 8V3Z" fill="#f6a11d" stroke="#55607c"/><path d="M7 2V13Q3 11 2 7V4Z" fill="#fde6a8"/></svg><b>安全警告</b><span>部分活动内容已被禁用。</span><button>选项...</button></div><svg class="wx" viewBox="0 0 12 12"><path d="M2 2L10 10M10 2L2 10" stroke="#62718a" stroke-width="2"/></svg></div>

  <div class="fbar"><div class="name">C11<svg><use href="#tri"/></svg></div><div class="fx"><i></i><svg viewBox="0 0 12 12"><path d="M2 2L10 10M10 2L2 10" stroke="#555" stroke-width="2"/></svg><svg viewBox="0 0 14 12"><path d="M1 6L5 10L13 1" fill="none" stroke="#555" stroke-width="2"/></svg><em>fx</em></div><input type="text" aria-label="Formula" value="1-3盲孔做树脂塞孔；其余通孔按我司规范处理"><button aria-label="Expand"><svg viewBox="0 0 8 10"><path d="M1 1L4 4L7 1M1 5L4 8L7 5" fill="none" stroke="#000" stroke-width="2"/></svg></button></div>

  <div class="sheetwrap">
    <table>
      <colgroup><col class="c0"><col class="ca"><col class="cb"><col class="cc"><col class="cd"><col class="ce"><col class="cf"><col class="cg"><col class="ch"><col class="ci"><col class="cj"><col class="ck"><col class="cl"></colgroup>
      <thead><tr><th class="corner"></th><th>A</th><th>B</th><th class="hl">C</th><th class="hl">D</th><th class="hl">E</th><th class="hl">F</th><th class="hl">G</th><th class="hl">H</th><th class="hl">I</th><th>J</th><th>K</th><th>L</th></tr></thead>
      <tbody>
        <tr class="r7"><th>7</th><td class="k sec" colspan="2">工艺流程<br>指示</td><td class="k" colspan="7"></td><td class="k"></td><td></td><td></td></tr>
        <tr><th>8</th><td class="k side" rowspan="5"></td><td class="k n">1</td><td class="k red" colspan="7">1-3盲孔可用背钻工艺实现，背钻对应L4层不削铜，保证铜皮的完整性</td><td class="k"></td><td></td><td></td></tr>
        <tr><th>9</th><td class="k n">2</td><td class="k red bold" colspan="7">表面沉金，金厚≥0.05um</td><td class="k"></td><td></td><td></td></tr>
        <tr><th>10</th><td class="k n">3</td><td class="k red bold" colspan="7">阻焊符合IPC-SM-840标准 ,CLASS 2</td><td class="k"></td><td></td><td></td></tr>
        <tr><th class="hl">11</th><td class="k n">4</td><td class="k" colspan="7"><span class="caret">1-3盲孔做树脂塞孔；其余通孔按我司规范处理</span></td><td class="k"></td><td></td><td></td></tr>
        <tr class="r12"><th>12</th><td class="k n">5</td><td class="k red" colspan="7">滤波器线宽公差控制±1.5 mil，需要测试滤波器的每条线宽，并在测试报告中附上滤波器线宽测试数据,<br>见图1</td><td class="k fig"><u>图</u><br>1(fig1)'!A</td><td></td><td></td></tr>
      </tbody>
    </table>
    <div class="xscroll"><i class="split"></i><svg viewBox="0 0 9 5"><path d="M0 5L4.500 0L9 5Z" fill="#3c5780"/></svg><div class="xthumb"></div></div>
  </div>
</section>

<div class="mark"></div>
<svg class="pointer" viewBox="0 0 220 140"><path d="M207 14L22 126" stroke="#f00" stroke-width="5" stroke-linecap="round"/><path d="M3 140Q-1 138 2 134L18 113Q22 111 22 116L29 129Q30 134 24 134Z" fill="#f00"/></svg>
</body>
</html>
```
FILE: styles.css
```css
*{box-sizing:border-box}
body{margin:0;height:100vh;overflow:hidden;position:relative;background:#000;font-family:"Noto Sans","Noto Sans CJK SC",sans-serif;font-size:12px}
button{font:inherit;color:inherit;background:none;border:0;padding:0;margin:0}
p,h3{margin:0;font-weight:inherit;font-size:inherit}
svg{display:block}
.defs{position:absolute;width:0;height:0}

/* main window */
.genesis{height:100vh;margin:0 8px 0 -14px;display:flex;flex-direction:column;background:#000}
.title{height:24px;flex:none;background:#fff;color:#999;display:flex;align-items:flex-start;gap:6px;line-height:16px}
.xicon{width:16px;height:15px;margin-left:2px}
.winctl{margin-left:auto;display:flex;gap:33px;padding-right:17px}
.winctl svg{width:12px;height:14px;fill:none;stroke:#777}
.top{display:flex;height:55px;flex:none;background:#9bdbda}
.menu{flex:1;display:flex;align-items:center;gap:17px;padding:0 12px 2px 11px;font:bold 14px "Liberation Serif",serif;border-top:2px solid #4f7f7d;border-bottom:2px solid #d0f4f2;border-right:3px solid #4f7f7d;box-shadow:inset 0 2px #c5efee,inset 0 -3px #4f7f7d}
.menu u{text-underline-offset:4px}
.menu .help{margin-left:auto}
.brand{width:413px;margin-left:3px;display:flex;gap:4px;border:3px solid #4f7f7d;border-bottom:3px solid #d0f4f2;border-right-color:#d0f4f2;padding-left:3px}
.logo{width:160px;height:28px;margin-top:10px}
.logo text{font:italic bold 32px "Liberation Sans",sans-serif;fill:#06067c}
.product{display:flex;flex-direction:column;align-items:center;width:134px;white-space:nowrap}
.product b{font:bold 24px/28px "Liberation Serif",serif}
.product i{font:italic bold 14px/20px "Liberation Serif",serif}
.clock{display:flex;flex-direction:column;align-items:center;font:italic bold 15px/15px "Liberation Mono",monospace;width:102px;padding-top:2px;white-space:nowrap}
.clock svg{width:10px;height:9px;align-self:flex-end;margin:6px 20px 0 0}
.work{flex:1;min-height:0;display:flex}

/* layer panel */
.layers{width:150px;flex:none;align-self:flex-start;background:#54cbae;padding:3px 2px 2px 2px;display:flex;flex-direction:column;font:bold 15px/18px "Liberation Mono",monospace}
.info p{background:#9bdbda;border:1px solid #000;height:20px;margin-bottom:-1px;white-space:pre;text-indent:-2px}
.info{padding-bottom:2px}
.matrix{height:27px;background:#9bdbda;border:1px solid #000;box-shadow:inset 0 3px #b9f0e6,inset -3px -3px #4f8f88;text-align:left;padding-left:0}
.frame{display:flex;margin-top:4px;border-top:2px solid #2f7d6d;border-bottom:4px solid #9becd9}
.list{width:119px;padding:1px 2px 10px 0;border-right:1px solid #000;border-bottom:1px solid #000;display:flex;flex-direction:column;gap:5px;font-size:12px;line-height:14px}
.grp{background:#000}
.ly{display:grid;grid-template-columns:16px 18px 81px;height:16px;align-items:center;position:relative}
.ly input{appearance:none;margin:0;width:16px;height:14px;border:2px solid #fff;border-right-width:3px}
.ly .sel{border-color:#00f}
.ly i{width:14px;height:14px;border-radius:50%;margin-left:2px}
.ly .blue{background:#001eff}.ly .red{background:#f00}.ly .olive{background:#3f9c00}
.ly span{background:#9bdbda;height:14px;padding-left:1px}
.green span{background:#00a57c}.orange span{background:#ffc54d}.white span{background:#fff}.gray span{background:#98b3bc}.pale span{background:#d8d8d8}
.h::after{content:"";position:absolute;right:3px;top:4px;width:8px;height:8px;background:#000;clip-path:polygon(0 45%,35% 35%,50% 0,65% 0,60% 35%,100% 35%,100% 55%,75% 60%,60% 100%,0 100%)}
.plus::after{content:"";position:absolute;right:2px;top:6px;width:5px;height:5px;border:1px solid #000;background:linear-gradient(90deg,transparent 1px,#000 1px,#000 2px,transparent 2px),linear-gradient(transparent 1px,#000 1px,#000 2px,transparent 2px)}
.groove{flex:1;background:linear-gradient(90deg,#54cbae 2px,#9becd9 2px 5px,#54cbae 5px 7px,#9becd9 7px 8px,#54cbae 8px)}
.vscroll{width:14px;background:#45ad96;border-left:2px solid #2f7d6d;border-right:2px solid #9becd9;display:flex;flex-direction:column}
.vscroll svg{width:10px;height:12px}
.thumb{flex:1;margin-top:20px;background:#54cdb0;border:2px solid #9becd9;border-right-color:#2f7d6d;border-bottom-color:#2f7d6d}
.selected{margin-top:4px;height:19px;border:1px solid #000;background:#ffc54d;font-size:12px;line-height:17px;padding-left:0}

.canvas{flex:1;min-width:0;overflow:hidden}
.canvas>svg{width:100%;height:100%;shape-rendering:crispEdges}

/* tool panel */
.tools{width:163px;flex:none;display:flex;flex-direction:column;border-left:2px solid #2f6b60;background:#000}
.grid{display:grid;grid-template-columns:repeat(4,38px);gap:2px;padding:3px 0 1px 0;border-bottom:4px solid #9bdbd0;border-right:1px solid #9bdbd0}
.grid.grey{padding:1px 0 1px 0}
.grid button{width:38px;height:38px;border:3px solid #c5efee;border-right-color:#4f8f88;border-bottom-color:#4f8f88;background:#9bdbda;display:grid;place-items:center}
.grid svg{width:30px;height:30px;border:1px solid #000;shape-rendering:crispEdges}
.grid .redb{border-color:#e00d0d}
.grid.grey button{background:#ccc;border-color:#eee #777 #777 #eee}
.grid.grey .lit{background:#fff}
.grid.grey .gold{background:#ffc54d;border-color:#ffe09a #a87c20 #a87c20 #ffe09a}
.ln{fill:none;stroke:#000;stroke-width:3}
.th{fill:none;stroke:#000;stroke-width:3}
.xy{font:bold 18px "Liberation Sans",sans-serif}
.scale{font:bold 40px "Liberation Sans",sans-serif;text-anchor:middle}
.ask{font:bold 46px "Liberation Sans",sans-serif;text-anchor:middle}
.overview{flex:1;padding-top:219px}
.overview svg{width:161px;height:70px;shape-rendering:crispEdges}
.coords{height:44px;background:#54cbae;display:flex;flex-direction:column;justify-content:center;padding-left:2px;font:bold 15px/16px "Liberation Mono",monospace;white-space:nowrap}

/* status bar */
.status{height:42px;flex:none;display:flex;gap:2px;background:#000;padding-bottom:1px;border-bottom:6px solid #c4f5f3;font:bold 12px "Liberation Mono",monospace;box-shadow:inset 0 -3px #4f8f88}
.status>*{margin-bottom:2px}
.sq{width:28px;background:#ffffce;border:3px solid #fffff0;outline:1px solid #aaa67a;outline-offset:-4px;display:grid;place-items:center}
.sq svg{width:20px;height:20px;fill:none;stroke:#000;border:1px solid #000}
.sq.teal{border-color:#54cbae}
.xyl{width:47px;background:#ffffce;display:grid;place-items:center;font-size:12px;white-space:pre}
.status input{width:173px;border:4px solid #d8d6a4;background:#ffffce;border-right-color:#c4c296;border-bottom-color:#c4c296}
.msg{flex:1;background:#ffffce;padding-left:3px;line-height:32px}
.inch{width:77px;background:#9bdbda;border:8px solid #54cbae;border-left-width:8px;font-size:14px;display:flex;align-items:center;justify-content:center;gap:8px}
.inch i{width:9px;height:5px;border:1px solid #2f7d6d;background:#c5efee}

.behind{position:absolute;right:0;top:0;width:8px;height:100%;background:linear-gradient(90deg,#e4e9ee 5px,transparent 5px),linear-gradient(#e9e9ec 23px,#000 23px 25px,#9bdbda 25px 115px,#000 115px 117px,#0a3aa0 117px)}

/* popview window */
.popview{position:absolute;left:168px;top:47px;width:993px;height:951px;display:flex;flex-direction:column;background:#000;box-shadow:0 0 0 1px #333,2px 3px 10px rgba(0,0,0,.5)}
.popview header{height:30px;flex:none;background:#fff;color:#999;display:flex;align-items:center;padding:0 9px 0 8px;gap:5px}
.popview header>svg{width:16px;height:15px}
.popview header button{margin-left:auto}
.popview header button svg{width:12px;height:12px;fill:none;stroke:#888}
.pbody{flex:1;min-height:0;display:flex;border-top:3px solid #2f6b60;border-left:3px solid #2f6b60;border-bottom:3px solid #9becd9}
.pview{flex:1;min-width:0;height:100%;background:#000}
.ptools{width:40px;margin-top:-3px;border-left:3px solid #9becd9;background:#54cbae;display:flex;flex-direction:column}
.ptools button{height:35px;background:#54cbae;border:1px solid #000;border-right-width:2px;display:grid;place-items:center}
.ptools svg{width:21px;height:21px;border:1px solid #000;background:#9bdbda;outline:4px solid #b5e6e2;shape-rendering:crispEdges;box-shadow:1px 1px 0 4px #4f8f88}
.pstatus{height:25px;margin:2px;background:#9bdbda;border:3px solid #c5efee;border-right-color:#4f8f88;border-bottom-color:#4f8f88;outline:1px solid #54cbae}

/* spreadsheet window */
.excel{position:absolute;left:409px;top:597px;bottom:0;width:967px;overflow:hidden;background:#bfdbff;display:flex;flex-direction:column;color:#15428b;font-family:"Noto Sans CJK SC",sans-serif;box-shadow:0 0 10px rgba(0,0,0,.5);border-right:1px solid #7f9db9}
.xtitle{height:30px;flex:none;background:#fff;color:#000;display:flex;align-items:center;justify-content:center;font-family:"Noto Sans","Noto Sans CJK SC",sans-serif}
.xtitle span{margin:0 0 0 118px;flex:1;text-align:center}
.xtitle .winctl svg{stroke:#000}
.qat{position:absolute;left:38px;top:6px;width:104px;height:22px;border:1px solid #a8b0bc;border-left:0;border-radius:0 11px 11px 0;display:flex;align-items:center;gap:5px;padding-left:13px;background:#f2f4f7;color:#8c9bb5}
.qat button svg{width:16px;height:16px}
.qat button{margin-right:2px}
.more{position:absolute;left:148px;top:12px;width:7px;height:7px}
.t{width:5px;height:3px;flex:none}
.orb{position:absolute;left:3px;top:8px;width:36px;height:36px;z-index:2}
.tabs{height:26px;flex:none;display:flex;align-items:flex-end;padding-left:46px;gap:5px}
.tabs button{height:24px;padding:0 12px 2px}
.tabs .on{background:#e9f2fc;border:1px solid #8db2e3;border-bottom:0;border-radius:4px 4px 0 0}
.docctl{margin:0 5px 6px auto;display:flex;gap:10px;align-items:center}
.docctl svg{width:12px;height:12px}
.docctl svg:first-child{width:14px;height:14px}
.docctl text{font:bold 10px "Liberation Sans",sans-serif;fill:#fff;text-anchor:middle}
.ribbon{height:107px;flex:none;margin:0 1px;padding:2px;display:flex;gap:4px;border:1px solid #8db2e3;border-radius:4px;background:linear-gradient(#dce9f7,#c8dbf0 15px,#c7d9ee 80px,#e0f4fb)}
.rg{display:flex;flex-direction:column;border:1px solid #a9c3e2;border-radius:3px;flex:none;overflow:hidden;background:linear-gradient(#dce7f4 14px,#c9dbef 15px,#d9e6f5)}
.rg h3{height:20px;line-height:19px;text-align:center;background:#c1d8f0;color:#3e6aaa;position:relative}
.w1 h3{padding-right:16px}
.w2 h3{padding-right:18px}
.w3 h3{padding-right:18px}
.w4 h3{padding-right:18px}
.rg h3 svg{position:absolute;right:4px;top:3px;width:9px;height:9px}
.rb{flex:1;min-height:0}
.w1{width:71px}.w2{width:233px}.w3{width:164px}.w4{width:135px}.w5{width:116px}.w6{width:67px}.w7{width:123px}
.clip,.edit{display:flex}
.clip{padding:5px 4px;gap:6px}
.big{display:flex;flex-direction:column;align-items:center;line-height:17px;white-space:nowrap}
.clip .big{width:38px}
.big>svg:first-child{width:28px;height:30px;margin-bottom:5px;flex:none}
.clip .big .t{margin-top:5px}
.smalls{display:flex;flex-direction:column;gap:6px}
.smalls svg:not(.t){width:16px;height:16px}
.rows{display:flex;flex-direction:column;padding:11px 3px 0;gap:11px}
.r{display:flex;align-items:center;gap:4px;height:25px}
.rows .r+.r{height:22px}
.r select{appearance:none;height:25px;border:1px solid #abc1de;background:linear-gradient(45deg,transparent 50%,#4a6a9c 50%) right 7px center/3px 3px no-repeat,linear-gradient(-45deg,transparent 50%,#4a6a9c 50%) right 4px center/3px 3px no-repeat,#eaf2fb;font:12px "Noto Sans CJK SC",sans-serif;padding:0 2px;margin:0;border-radius:0;color:#000}
.r select:disabled{opacity:1;color:#999;background-color:#ebebeb}
.s130{width:131px}.r .s46{width:46px;margin-left:-5px}.s127{width:128px}
.bg{display:flex;align-items:center;justify-content:space-around;gap:3px;height:22px;border:1px solid #94b0d6;border-radius:3px;padding:0 3px;background:linear-gradient(#dce8f6,#c5d9f0)}
.bg .i{width:16px;height:14px}
.bg .hi{margin-bottom:6px}.bg .lo{margin-top:6px}
.three{width:68px}.two{width:45px}.w79{width:79px}
.serif{font-family:"Liberation Serif",serif;font-weight:bold;color:#222;line-height:18px;width:19px}
.f18{font-size:18px}.f14{font-size:14px}
.serif sup{font-size:8px;line-height:8px;color:#2c4f8c}
.it{font-style:italic}.ul{text-decoration:underline}
.fa{font:bold 15px/15px "Liberation Serif",serif;border-bottom:4px solid #e00d0d;width:16px;text-align:center;color:#2c4f8c}
.wen{font-size:9px;line-height:9px;color:#8391a8;text-align:center}
.ab{font:bold 10px "Liberation Sans",sans-serif;fill:#7c8aa2}
.am{font:bold 9px "Liberation Sans",sans-serif;text-anchor:middle;fill:#445}
.hot{width:22px;height:22px;border:1px solid #c59a50;background:#ffd58a;display:grid;place-items:center;margin-left:16px;border-radius:2px}
.hot svg{width:16px;height:16px}
.h2{margin-left:5px}
.w79 span,.w79 b{color:#667}
.dec{font-size:9px;line-height:9px;color:#667;gap:0;padding:0}
.col{display:flex;flex-direction:column;padding:1px 0 0 6px;gap:2px}
.col button{display:flex;align-items:center;gap:3px;height:20px;white-space:nowrap}
.col button svg:first-child{width:16px;height:16px}
.dim,.dimb{color:#8a8f98}
.edit{gap:4px;padding:4px 4px 0 6px}
.edit .e{width:24px;padding-top:0}
.e button{display:flex;align-items:center;gap:4px;height:16px}
.sigma{font-size:15px;line-height:16px;color:#000;width:16px}
.edit .big{width:38px}
.edit .big svg{margin-bottom:4px}
.az{font:bold 14px "Liberation Serif",serif;fill:#8f9bb0}
.warn{height:44px;flex:none;display:flex;padding:6px 0 5px 2px;background:#bfd8f6}
.wbox{flex:1;border:1px solid #9ebbe0;background:#ecf7fd;display:flex;align-items:center;padding-left:3px}
.wbox svg{width:14px;height:16px;margin-right:10px}
.wbox span{margin:0 11px 0 12px}
.wbox button{width:70px;height:21px;border:1px solid #8fa9c9;background:#fff}
.wx{width:12px;height:12px;margin:3px 4px 0 5px}
.fbar{height:20px;flex:none;display:flex;background:#fff;border:1px solid #6f94be;border-width:1px 0;color:#000}
.name{width:161px;text-align:center;font:14px/18px "Noto Sans CJK SC",sans-serif;padding-right:22px;position:relative}
.name svg{position:absolute;right:8px;top:7px;width:7px;height:4px}
.fx{width:76px;border-right:1px solid #6f94be;border-radius:10px 0 0 10px;background:#c5d8ef;display:flex;align-items:center;gap:7px;padding-left:4px}
.fx i{width:9px;height:9px;border-radius:50%;background:#a9b4c4}
.fx svg{width:12px;height:11px}
.fx em{font:italic bold 14px "Liberation Serif",serif;color:#444}
.fbar input{flex:1;min-width:0;border:0;padding:0 0 0 9px;font:15px/18px "Noto Sans CJK SC",sans-serif}
.fbar button{width:16px;background:#bcd2ee;border:1px solid #6f94be;display:grid;place-items:center}
.fbar button svg{width:8px;height:10px}
.sheetwrap{display:flex;margin-top:3px;border-top:1px solid #6f94be;flex:1;min-height:0;overflow:hidden;background:#fff}
table{table-layout:fixed;width:965px;flex:none;margin-right:-15px;border-collapse:collapse;color:#000;font-size:13px;line-height:16px}
.c0{width:34px}.ca{width:57px}.cb{width:37px}.cc{width:166px}.cd{width:31px}.ce{width:81px}.cf{width:54px}.cg{width:49px}.ch{width:89px}.ci{width:139px}.cj{width:88px}.ck{width:70px}.cl{width:70px}
th{font:15px/17px "Liberation Serif",serif;padding:0;background:#e4ecf7;border:1px solid #9eb6ce;color:#27413e}
thead th{height:19px;background:linear-gradient(#f4f7fb,#d3dbe9);border-top:0}
.hl{background:#ffd58d;border-color:#f29536}
thead .hl{background:linear-gradient(#f9d99f,#f1c15f)}
thead .corner{background:#a9c4e9}
tbody th{vertical-align:bottom;height:40px}
.r7 th{height:44px}
td{border:1px solid #d0d7e5;padding:0 3px;white-space:nowrap}
td.k{border-color:#000}
td.side,td.sec{border-left-color:#9eb6ce}
.sec{text-align:center;font-size:17px;line-height:19px;font-weight:bold}
.n{font:bold 16px "Liberation Serif",serif;text-align:center}
.red{color:#d01818}
.bold{font:bold 14px "Liberation Mono","Noto Sans CJK SC",monospace;color:#e80808}
.caret{border-right:1px solid #000}
.r12 td{vertical-align:top;padding-top:7px;height:60px}
.r12 .n{padding-top:16px}
.r12 .fig{font:13px/20px "Liberation Mono","Noto Sans CJK SC",monospace;padding-top:3px}
.r12 th{height:60px}
.xscroll{width:16px;background:#7f9fcb;display:flex;flex-direction:column;align-items:center;flex:none;position:relative;z-index:1}
.split{width:14px;height:8px;background:#fff;border:1px solid #6f94be}
.xscroll svg{width:9px;height:5px;margin-top:6px}
.xthumb{width:14px;height:139px;margin-top:35px;border:1px solid #5b7ba8;border-radius:2px;background:repeating-linear-gradient(#7a8ba5 0 1px,transparent 1px 3px) center/8px 9px no-repeat,linear-gradient(90deg,#f2f5fa,#c0cde0)}

/* annotations laid over the windows */
.mark{position:absolute;left:176px;top:413px;width:940px;height:208px;border:4px solid #ffff26;box-shadow:2px 3px 4px rgba(0,0,0,.6),inset 2px 2px 4px rgba(0,0,0,.5)}
.pointer{position:absolute;left:820px;top:882px;width:220px;height:140px}
```
